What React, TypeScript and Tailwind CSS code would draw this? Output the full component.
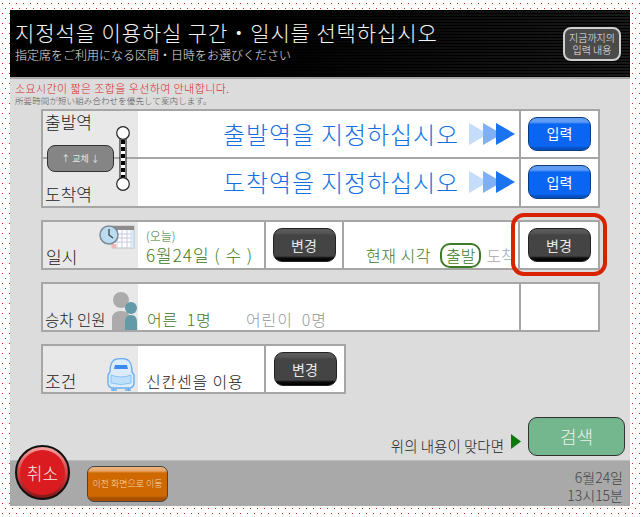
import React from "react";

const KR = "[font-family:'Noto_Sans_CJK_KR','Noto_Sans',sans-serif]";

function GlossBtn({ blue, label }: { blue?: boolean; label: string }) {
  return (
    <div
      className={
        "flex h-[34px] w-[63px] items-center justify-center rounded-[9px] border text-[14px] font-normal " +
        (blue
          ? "border-[#0a3a80] bg-[linear-gradient(#5f9df5_0,#5f9df5_4px,#0a66f2_6px,#0a66f2_28px,#0650c0_30px,#0650c0_100%)] text-white"
          : "border-[#222] bg-[linear-gradient(#5c5c5c_0,#555_4px,#444_6px,#444_27px,#0c0c0c_29px,#000_100%)] text-[#e8e8e8]")
      }
    >
      {label}
    </div>
  );
}

function Arrows() {
  return (
    <svg width="46" height="22" viewBox="0 0 46 22" className="shrink-0">
      <polygon points="0,0 19,11 0,22" fill="#c6dcfb" />
      <polygon points="14,0 33,11 14,22" fill="#7fb0f7" />
      <polygon points="27,0 46,11 27,22" fill="#1a73f0" />
    </svg>
  );
}

function ClockIcon() {
  return (
    <svg width="36" height="24" viewBox="0 0 36 24">
      <rect x="13" y="1" width="22" height="22" fill="#fff" stroke="#bbb" />
      <rect x="13" y="1" width="22" height="4" fill="#8c8c8c" />
      <path d="M13 9h22M13 13h22M13 17h22M18 5v18M23 5v18M28 5v18" stroke="#c9c9e0" strokeWidth="1" />
      <rect x="31" y="5" width="4" height="18" fill="#cfe4f6" opacity=".7" />
      <rect x="13" y="19" width="4" height="4" fill="#f0b8b8" />
      <circle cx="10" cy="10" r="9" fill="#bcdcf2" stroke="#7d8a96" strokeWidth="1.5" />
      <path d="M10 4v6l4 3" stroke="#444" strokeWidth="1.3" fill="none" />
    </svg>
  );
}

function PeopleIcon() {
  return (
    <svg width="26" height="38" viewBox="0 0 26 38">
      <circle cx="9" cy="8" r="8" fill="#ababab" />
      <path d="M0 38V27q0-8 9-8t9 8v11z" fill="#ababab" />
      <circle cx="19" cy="16" r="6" fill="#629aa8" />
      <path d="M13 38V30q0-7 6-7t6 7v8z" fill="#629aa8" />
    </svg>
  );
}

function TrainIcon() {
  return (
    <svg width="28" height="34" viewBox="0 0 28 34">
      <path d="M7 2q7-3 14 0q4 3 4 12l2 3v8q0 4-4 5H5q-4-1-4-5v-8l2-3q0-9 4-12z" fill="#dcecfb" stroke="#6aaef0" strokeWidth="1.4" />
      <path d="M8 7h12l1 4H7z" fill="#3d8bf0" />
      <path d="M4 17q10 4 20 0v8q-10 3-20 0z" fill="#bfe0fa" stroke="#8cc2f2" strokeWidth="1" />
      <path d="M7 30l-1 3M21 30l1 3M4 32h6M18 32h6" stroke="#6aaef0" strokeWidth="1.4" />
    </svg>
  );
}

export default function App() {
  return (
    <div
      className={
        "h-[517px] w-[642px] overflow-hidden bg-white pl-[10px] pt-[10px] font-light [background-image:radial-gradient(circle_at_0.5px_0.5px,#d82010_0.7px,transparent_0.72px),radial-gradient(circle_at_0.5px_0.5px,#d82010_0.7px,transparent_0.72px)] [background-position:2px_3px,5px_8px] [background-size:7px_10px] " +
        KR
      }
    >
      <div className="relative flex h-[496px] w-[620px] flex-col bg-[#dcdcdc]">
        {/* header */}
        <div className="flex h-[69px] shrink-0 items-start justify-between border-b-2 border-[#a8a8a8] bg-[linear-gradient(90deg,#000_0%,#000_40%,transparent_100%),repeating-linear-gradient(#000_0,#000_1px,#333_2px,#000_3px)] pl-[5px] pr-[9px]">
          <div>
            <div className="mt-[8px] whitespace-nowrap text-[21px] leading-[28px] tracking-[0.9px] text-[#f4f4f4]">
              지정석을 이용하실 구간・일시를 선택하십시오
            </div>
            <div className="mt-[1px] whitespace-nowrap text-[12px] leading-[16px] text-[#e0e0e0] [font-family:'Noto_Sans_CJK_JP',sans-serif]">
              指定席をご利用になる区間・日時をお選びください
            </div>
          </div>
          <div className="mt-[17px] flex h-[34px] w-[58px] flex-col items-center justify-center rounded-[8px] border-2 border-[#cfcfcf] bg-[#4a4a4a] text-[10px] leading-[12px] text-[#ececec]">
            <span>지금까지의</span>
            <span>입력 내용</span>
          </div>
        </div>

        {/* notice */}
        <div className="mt-[3px] pl-[5px]">
          <div className="text-[11px] leading-[13px] tracking-[0.4px] text-[#d62828]">소요시간이 짧은 조합을 우선하여 안내합니다.</div>
          <div className="text-[8.5px] leading-[11px] tracking-[0.1px] text-[#555] [font-family:'Noto_Sans_CJK_JP',sans-serif]">
            所要時間が短い組み合わせを優先して案内します。
          </div>
        </div>

        {/* content */}
        <div className="ml-[31px] mt-[3px] flex w-[559px] flex-col gap-[12px]">
          {/* stations */}
          <div className="relative grid h-[99px] grid-cols-[95px_381px_1fr] grid-rows-2 border-2 border-[#a6a6a6] bg-white">
            <div className="row-span-2 flex flex-col justify-between bg-[#e8e8e8] pl-[2px] text-[17px] leading-[22px] text-[#222]">
              <span>출발역</span>
              <span className="mb-[1px]">도착역</span>
            </div>
            <div className="flex items-center justify-end gap-[10px] border-b-2 border-[#a6a6a6] pr-[4px] text-[24px] tracking-[0.9px] text-[#1470e0]">
              <span>출발역을 지정하십시오</span>
              <Arrows />
            </div>
            <div className="col-start-3 row-start-1 flex items-center justify-center border-b-2 border-l-2 border-[#a6a6a6]">
              <GlossBtn blue label="입력" />
            </div>
            <div className="col-start-2 flex items-center justify-end gap-[10px] pr-[4px] text-[24px] tracking-[0.9px] text-[#1470e0]">
              <span>도착역을 지정하십시오</span>
              <Arrows />
            </div>
            <div className="col-start-3 flex items-center justify-center border-l-2 border-[#a6a6a6]">
              <GlossBtn blue label="입력" />
            </div>
            {/* overlay: swap button and route line */}
            <div className="absolute left-0 top-[46px] h-[2px] w-[95px] bg-[#a6a6a6]" />
            <div className="absolute left-[4px] top-[34px] flex h-[27px] w-[67px] items-center justify-center rounded-[8px] border border-[#333] bg-[#858585] text-[9px] font-normal text-[#e4e4e4]">
              ↑ 교체 ↓
            </div>
            <svg className="absolute left-[72px] top-[15px]" width="16" height="66" viewBox="0 0 16 66">
              <rect x="5" y="7" width="6" height="51" fill="#fff" stroke="#000" />
              <path d="M8 14v38" stroke="#000" strokeWidth="4" strokeDasharray="4 3" />
              <circle cx="8" cy="7" r="6.3" fill="#fff" stroke="#222" strokeWidth="1.2" />
              <circle cx="8" cy="58" r="6.3" fill="#fff" stroke="#222" strokeWidth="1.2" />
            </svg>
          </div>

          {/* date */}
          <div className="grid h-[50px] grid-cols-[95px_126px_80px_174px_1fr] border-2 border-[#a6a6a6] bg-white">
            <div className="relative flex items-end bg-[#e8e8e8] pl-[3px] text-[17px] leading-[22px] text-[#222]">
              <span>일시</span>
              <div className="absolute right-[3px] top-[3px]"><ClockIcon /></div>
            </div>
            <div className="pl-[8px] text-[#3d7a24]">
              <div className="mt-[7px] text-[12px] leading-[14px]">(오늘)</div>
              <div className="whitespace-nowrap text-[17px] leading-[23px] tracking-[1px]">6월24일 ( 수 )</div>
            </div>
            <div className="flex items-center justify-center border-x-2 border-[#a6a6a6]">
              <GlossBtn label="변경" />
            </div>
            <div className="flex items-end overflow-hidden pl-[22px] text-[16px] leading-[25px] text-[#3d7a24]">
              <span className="whitespace-nowrap tracking-[0.5px]">현재 시각</span>
              <span className="ml-[9px] whitespace-nowrap rounded-[10px] border-2 border-[#3d7a24] px-[4px] leading-[21px]">출발</span>
              <span className="ml-[5px] whitespace-nowrap text-[#aaa]">도착</span>
            </div>
            <div className="flex items-center justify-center border-l-2 border-[#a6a6a6]">
              <GlossBtn label="변경" />
            </div>
          </div>

          {/* people */}
          <div className="grid h-[50px] grid-cols-[95px_381px_1fr] border-2 border-[#a6a6a6] bg-white">
            <div className="flex items-end justify-between bg-[#e8e8e8] pl-[2px] text-[15.5px] leading-[22px] text-[#222]">
              <span className="whitespace-nowrap">승차 인원</span>
              <PeopleIcon />
            </div>
            <div className="flex items-end pl-[9px] text-[16px] leading-[22px]">
              <span className="w-[99px] whitespace-nowrap tracking-[0.8px] text-[#3d7a24]">어른&nbsp; 1명</span>
              <span className="whitespace-nowrap tracking-[0.9px] text-[#999]">어린이&nbsp; 0명</span>
            </div>
            <div className="border-l-2 border-[#a6a6a6]" />
          </div>

          {/* conditions */}
          <div className="grid h-[50px] w-[305px] grid-cols-[95px_126px_1fr] border-2 border-[#a6a6a6] bg-white">
            <div className="flex items-end justify-between bg-[#e8e8e8] pl-[2px] text-[17px] leading-[22px] text-[#222]">
              <span>조건</span>
              <div className="translate-x-[-3px]"><TrainIcon /></div>
            </div>
            <div className="flex items-end pl-[8px] text-[16px] leading-[22px] tracking-[0.8px] text-[#222]">
              신칸센을 이용
            </div>
            <div className="flex items-center justify-center border-l-2 border-[#a6a6a6]">
              <GlossBtn label="변경" />
            </div>
          </div>
        </div>

        {/* proceed */}
        <div className="mr-[5px] mt-[23px] flex items-end justify-end">
          <span className="whitespace-nowrap text-[14.5px] leading-[20px] text-[#222]">위의 내용이 맞다면</span>
          <svg className="mb-[7px] ml-[7px] mr-[7px]" width="10" height="15" viewBox="0 0 10 15">
            <polygon points="0,0 10,7.5 0,15" fill="#0a7a0a" />
          </svg>
          <div className="flex h-[39px] w-[97px] items-center justify-center rounded-[9px] border border-[#333] bg-[#74b78f] text-[18px] text-[#e8f2ec]">
            검색
          </div>
        </div>

        {/* footer */}
        <div className="mt-auto flex h-[46px] items-center justify-between border-t border-[#bbb] bg-[#a9a9a9] pl-[77px] pr-[7px]">
          <div className="flex h-[36px] w-[81px] items-center justify-center whitespace-nowrap rounded-[7px] border border-[#444] bg-[linear-gradient(#f0b57a_0,#e8a468_4px,#d06800_6px,#d06800_29px,#a85000_31px,#a85000_100%)] text-[9px] text-[#f6d8b4]">
            이전 화면으로 이동
          </div>
          <div className="mt-[5px] text-right text-[14px] leading-[18px] text-[#444]">
            <div>6월24일</div>
            <div>13시15분</div>
          </div>
        </div>

        {/* overlays */}
        <div className="absolute left-[5px] top-[435px] flex h-[55px] w-[55px] items-center justify-center rounded-full border-2 border-[#111] bg-[linear-gradient(#f4a0a0,#d84040_50%,#801818)]">
          <div className="flex h-[45px] w-[45px] items-center justify-center rounded-full bg-[#da1c20] text-[17px] text-[#fbeaea]">
            취소
          </div>
        </div>
        <div className="absolute left-[501px] top-[203px] h-[63px] w-[96px] rounded-[13px] border-[4px] border-[#d92200]" />
      </div>
    </div>
  );
}
